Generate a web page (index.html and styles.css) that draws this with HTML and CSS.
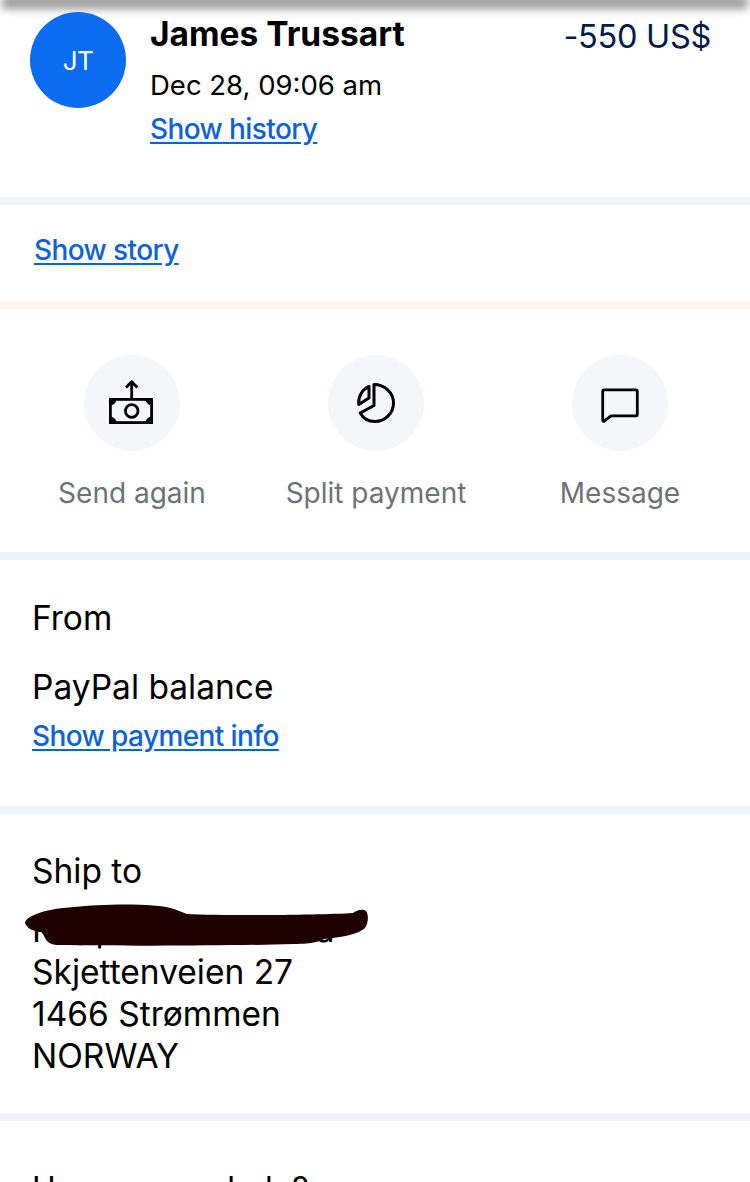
FILE: index.html
```html
<!DOCTYPE html>
<html lang="en">
<head>
<meta charset="utf-8">
<title>Payment details</title>
<link rel="stylesheet" href="styles.css">
</head>
<body>
<div class="page">
  <div class="top-shadow"></div>
  <section class="summary">
    <div class="avatar">JT</div>
    <div class="who">
      <div class="name">James Trussart</div>
      <div class="date">Dec 28, 09:06 am</div>
      <a class="link history" href="#">Show history</a>
    </div>
    <div class="amount">-550 US$</div>
  </section>
  <section class="story">
    <a class="link" href="#">Show story</a>
  </section>
  <section class="actions">
    <div class="action">
      <div class="circle">
        <svg class="icon" width="48" height="48" viewBox="0 0 48 48" fill="none" stroke="#000" stroke-width="2.8">
          <path d="M23.700 19V3M18 8.500l5.700-5.700 5.700 5.700" stroke-linejoin="round"/>
          <rect x="2.400" y="20.400" width="41.200" height="23.200"/>
          <circle cx="23.700" cy="32" r="6.300"/>
          <path class="corner" d="M2.400 20.400h5.500c0 3-2.500 5.500-5.500 5.500zM43.600 20.400h-5.500c0 3 2.500 5.500 5.500 5.500zM2.400 43.600h5.500c0-3-2.500-5.500-5.500-5.500zM43.600 43.600h-5.500c0-3 2.500-5.500 5.500-5.500z"/>
        </svg>
      </div>
      <div class="label">Send again</div>
    </div>
    <div class="action">
      <div class="circle">
        <svg class="icon" width="48" height="48" viewBox="0 0 48 48" fill="none" stroke="#000" stroke-width="3" stroke-linejoin="round">
          <path d="M22 5.500c10.500 0 19.500 8 19.500 18.500 0 10.500-8.500 18.500-18.500 18.500-6.500 0-11.800-3-14.800-8.500L22 26.500z"/>
          <path d="M17 7.500v11.500L6.800 25.500C6 17.500 10 10.500 17 7.500z"/>
        </svg>
      </div>
      <div class="label">Split payment</div>
    </div>
    <div class="action">
      <div class="circle">
        <svg class="icon" width="48" height="48" viewBox="0 0 48 48" fill="none" stroke="#000" stroke-width="2.800" stroke-linejoin="round">
          <path d="M6.700 12.300a1.500 1.500 0 0 1 1.500-1.500h31.600a1.500 1.500 0 0 1 1.500 1.500v23a1.500 1.500 0 0 1-1.500 1.500H15l-6.800 5.400a1 1 0 0 1-1.500-.8z"/>
        </svg>
      </div>
      <div class="label">Message</div>
    </div>
  </section>
  <section class="from">
    <h2 class="heading">From</h2>
    <div class="body-line method">PayPal balance</div>
    <a class="link" href="#">Show payment info</a>
  </section>
  <section class="ship">
    <h2 class="heading">Ship to</h2>
    <address class="address">
      <span class="address-line hidden-name">Recipient name data</span>
      <span class="address-line">Skjettenveien 27</span>
      <span class="address-line">1466 Strømmen</span>
      <span class="address-line">NORWAY</span>
    </address>
    <svg class="blob" width="346" height="44" viewBox="0 0 346 44" aria-hidden="true">
      <path d="M1 21C2 14 20 7 50 5 80 2 130 1 150 7L163 12C200 14 300 13 329 11 332 9 336 7 340 8 345 9 345 20 341 26 335 32 320 35 300 37 296 39 290 42 270 42 200 44 100 44 33 43 20 42 22 34 17 30 10 29 4 28 1 21z" fill="#1f0100"/>
    </svg>
  </section>
  <section class="help">
    <h2 class="help-heading">How can we help?</h2>
  </section>
</div>
</body>
</html>
```
FILE: styles.css
```css
* { box-sizing: border-box; }
html, body { margin: 0; padding: 0; height: 100%; overflow: hidden; background: #fff; }
body { font-family: Inter, "Liberation Sans", sans-serif; color: #000; }
.page { position: relative; width: 750px; height: 1182px; overflow: hidden; background: #fff; }
.top-shadow { position: absolute; top: -4px; left: 2px; right: 2px; height: 13px; background: #9a9a9a; filter: blur(4px); }
section { border-bottom: 8px solid #eff3fb; }
.summary { height: 205px; padding: 12px 39px 0 30px; display: flex; align-items: flex-start; }
.avatar { position: relative; width: 96px; height: 96px; border-radius: 50%; background: #0a6cf0; color: #fff; font-size: 26px; display: flex; align-items: center; justify-content: center; flex: none; letter-spacing: -0.5px; }
.who { margin-left: 24px; flex: 1; }
.name { font-size: 33.500px; font-weight: 700; line-height: 44px; }
.date { font-size: 27.500px; line-height: 36px; margin-top: 11px; }
.history { display: inline-block; margin-top: 8px; }
.amount { font-size: 32.500px; line-height: 48px; margin-top: 1px; color: #001c4b; letter-spacing: -0.3px; }
.link { color: #0d62d9; font-size: 28px; line-height: 36px; font-weight: 500; text-decoration: underline; text-underline-offset: 3px; letter-spacing: -0.6px; }
.story { height: 104px; padding: 27px 34px 0; border-bottom-color: #fcf5f0; }
.actions { height: 251px; padding-top: 46px; padding-left: 10px; display: flex; align-items: flex-start; }
.action { width: 244px; display: flex; flex-direction: column; align-items: center; }
.circle { width: 96px; height: 96px; border-radius: 50%; background: #f4f6fa; display: flex; align-items: center; justify-content: center; }
.corner { fill: #000; stroke-width: 1; }
.label { color: #6c7378; font-size: 28px; line-height: 36px; margin-top: 24px; white-space: nowrap; }
.from { height: 254px; padding: 37px 32px 0; }
.heading { font-size: 33.500px; font-weight: 400; line-height: 42px; margin: 0; }
.body-line { font-size: 33.500px; line-height: 42px; }
.method { margin-top: 27px; }
.from .link { display: inline-block; margin-top: 10px; }
.ship { position: relative; height: 307px; padding: 36px 32px 0; }
.address { font-style: normal; font-size: 33.500px; line-height: 42px; margin-top: 17px; }
.address-line { display: block; }
.hidden-name { letter-spacing: -1.100px; white-space: nowrap; }
.blob { position: absolute; left: 24px; top: 88px; }
.help { border-bottom: 0; padding: 47px 32px 0; }
.help-heading { font-size: 32px; font-weight: 400; line-height: 42px; margin: 0; white-space: nowrap; }
```
